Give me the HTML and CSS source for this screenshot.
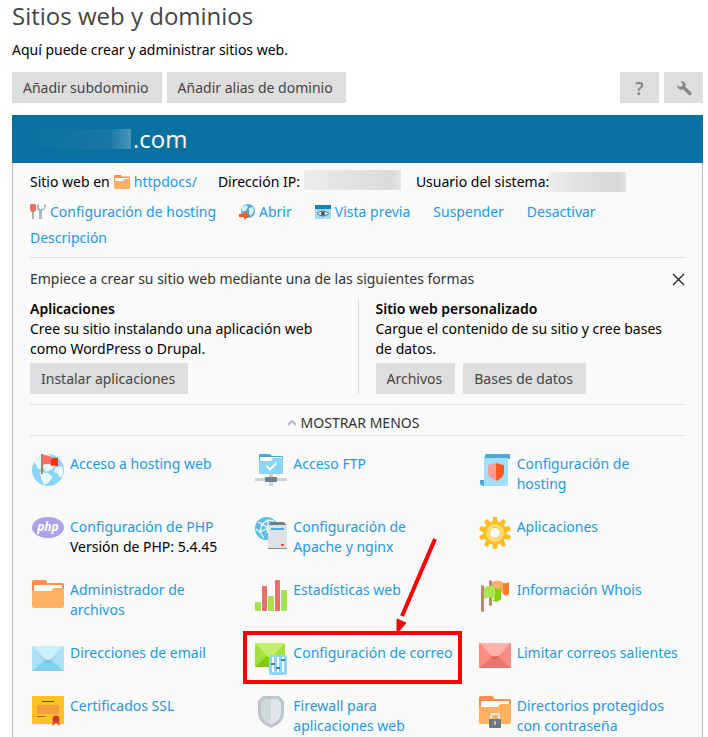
FILE: index.html
```
<!DOCTYPE html>
<html lang="es">
<head>
    <meta charset="UTF-8">
    <meta name="viewport" content="width=device-width, initial-scale=1.0">
    <title>Sitios web y dominios</title>
    <link rel="stylesheet" href="styles.css">
</head>
<body>
    <h1>Sitios web y dominios</h1>
    <p class="intro">Aquí puede crear y administrar sitios web.</p>

    <div class="toolbar">
        <button type="button" class="btn">Añadir subdominio</button>
        <button type="button" class="btn">Añadir alias de dominio</button>
        <button type="button" class="btn btn-icon btn-help" aria-label="Ayuda">?</button>
        <button type="button" class="btn btn-icon" aria-label="Ajustes">
            <svg width="16" height="16" viewBox="0 0 16 16"><path d="M4.500 1.500A4 4 0 0 1 9.400 6.800L15 12.200A1.700 1.700 0 0 1 12.600 14.700L7 9.300A4 4 0 0 1 1.200 5.200L3.600 6.800L6.200 6.200L6.600 3.800Z" fill="#868686"/></svg>
        </button>
    </div>

    <div class="panel">
        <h2><span class="domain-hidden"></span>.com</h2>
        <div class="panel-body">
            <div class="info">
                <span class="info-item">Sitio web en
                    <a href="#" class="icon-link">
                        <svg width="16" height="16" viewBox="0 0 32 32"><path d="M0 4q0-2 2-2h11q2 0 2 3h15q2 0 2 2v10H0z" fill="#ff8c50"/><path d="M2 8h28v8H2z" fill="#fff"/><path d="M0 14h18q2-4 4-4h10v18q0 2-2 2H2q-2 0-2-2z" fill="#ffb060"/></svg>
                        httpdocs/</a>
                </span>
                <span class="info-item">Dirección IP: <span class="ip-hidden"></span></span>
                <span class="info-item user">Usuario del sistema:<span class="user-hidden"></span></span>
            </div>
            <div class="actions">
                <a href="#" class="icon-link">
                    <svg width="16" height="16" viewBox="0 0 16 16"><path d="M1 0h4l1 1v5L4.500 8h-3L0 6V1z" fill="#eb6e66"/><path d="M2 8h2v7H2z" fill="#a8b4ba"/><path d="M7 1q-1 4 2 6v8h3V7q4-2 4-6l-2-1v4l-2 1h-2L9 4V0z" fill="#adb7bd"/></svg>
                    Configuración de hosting</a>
                <a href="#" class="icon-link">
                    <svg width="16" height="16" viewBox="0 0 16 16"><circle cx="9" cy="7" r="7" fill="#55a9d5"/><path d="M3 3l4-2 2 2-2 3-2 2-2-1zM10 4l4-1 1 4-3 5-2-2V7zM6 9l3 1-1 3z" fill="#d7f0fa"/><path d="M0 10h5V7l6 4.500L5 16v-3H0z" fill="#ff5b14"/></svg>
                    Abrir</a>
                <a href="#" class="icon-link">
                    <svg width="16" height="16" viewBox="0 0 16 16"><rect y="1" width="16" height="14" rx="1" fill="#a4daf2"/><path d="M0 1h16v4H0z" fill="#0d83b7"/><path d="M2 9.500q6-5 12 0q-6 5-12 0" fill="#eef7fb" stroke="#55717e"/><circle cx="8" cy="9.500" r="2" fill="#39505e"/></svg>
                    Vista previa</a>
                <a href="#">Suspender</a>
                <a href="#">Desactivar</a>
                <a href="#">Descripción</a>
            </div>

            <section class="start">
                <div class="start-head">
                    <span>Empiece a crear su sitio web mediante una de las siguientes formas</span>
                    <button type="button" class="close" aria-label="Cerrar">
                        <svg width="13" height="13" viewBox="0 0 13 13"><path d="M1 1l11 11M12 1L1 12" stroke="#222" stroke-width="1.300" fill="none"/></svg>
                    </button>
                </div>
                <div class="start-cols">
                    <div class="start-col">
                        <h3>Aplicaciones</h3>
                        <p>Cree su sitio instalando una aplicación web como WordPress o Drupal.</p>
                        <button type="button" class="btn">Instalar aplicaciones</button>
                    </div>
                    <div class="start-col">
                        <h3>Sitio web personalizado</h3>
                        <p>Cargue el contenido de su sitio y cree bases de datos.</p>
                        <div class="start-buttons">
                            <button type="button" class="btn">Archivos</button>
                            <button type="button" class="btn">Bases de datos</button>
                        </div>
                    </div>
                </div>
            </section>

            <button type="button" class="toggle">
                <svg width="8" height="6" viewBox="0 0 8 6"><path d="M0 5l4-4 4 4" stroke="#a9bac6" stroke-width="2" fill="none"/></svg>
                MOSTRAR MENOS
            </button>

            <div class="tools">
                <div class="tool">
                    <svg width="32" height="32" viewBox="0 0 32 32"><circle cx="16" cy="16" r="16" fill="#8bd5f6"/><path d="M2 8q5-7 14-8l4 2-3 4 6 5-3 4-6 3-2-4-6 1-2-4zM8 18l8 1 5 4-5 6-4 2-3-7zM23 14l7-2q2 4 1 9l-3 3-2-4-4-2z" fill="#e8f8fd"/><path d="M9 0h2v20H9z" fill="#b2836c"/><path d="M11 1q5 0 9 2v8q-5-2-9 0z" fill="#ff6f63"/><path d="M19 5q3-2 7-1v8q-4-1-7 0z" fill="#ee350b"/></svg>
                    <div class="tool-text"><a href="#">Acceso a hosting web</a></div>
                </div>
                <div class="tool">
                    <svg width="32" height="32" viewBox="0 0 32 32"><path d="M4 1q0-1 1-1h10l2 2h10q1 0 1 1v8H4z" fill="#4fa8d2"/><path d="M5 3h22v5H5z" fill="#fff"/><path d="M4 7h12l2-3h10v15q0 1-1 1H5q-1 0-1-1z" fill="#8bd5f6"/><path d="M11.500 12l3.500 3.500 6.500-6.500" fill="none" stroke="#fff" stroke-width="2"/><path d="M0 24h32v3H0zM14 20h4v12h-4z" fill="#c9d3d8"/><rect x="10" y="23" width="12" height="5" rx="1" fill="#6f8088"/></svg>
                    <div class="tool-text"><a href="#">Acceso FTP</a></div>
                </div>
                <div class="tool">
                    <svg width="32" height="32" viewBox="0 0 32 32"><path d="M5 3h24v29H3l2-4z" fill="#a1e0fc"/><path d="M7 0h24v5h-2V4H6V1zM1 26h4v6H4q-3 0-3-4z" fill="#4fa8d2"/><path d="M17 9l8 2v7q0 6-8 9z" fill="#ff5a25"/><path d="M17 9l-8 2v7q0 6 8 9z" fill="#ff9b91"/></svg>
                    <div class="tool-text"><a href="#">Configuración de hosting</a></div>
                </div>

                <div class="tool">
                    <svg width="32" height="32" viewBox="0 0 32 32"><ellipse cx="16" cy="10.500" rx="16" ry="10.500" fill="#ada2ea"/><text x="16" y="14" class="php">php</text></svg>
                    <div class="tool-text"><a href="#">Configuración de PHP</a><span class="note">Versión de PHP: 5.4.45</span></div>
                </div>
                <div class="tool">
                    <svg width="32" height="32" viewBox="0 0 32 32"><circle cx="11.500" cy="11.500" r="11.500" fill="#60bde8"/><path d="M3 5l4 2 6-4 6 1M7 7l-2 8 8-4-6-4M13 3v8l4 2M1 12l4 3 4 6M13 11l-1 5" fill="none" stroke="#eaf7fd" stroke-width="1.300"/><path d="M16 5h13l3 4H13z" fill="#6f8088"/><path d="M13 8h19v24H13z" fill="#dce2e6"/><path d="M13 31h19v1H13z" fill="#7c8a91"/><path d="M16 11h13v2H16z" fill="#4ab0db"/><path d="M26 27h3v2h-3z" fill="#ff4632"/></svg>
                    <div class="tool-text"><a href="#">Configuración de Apache y nginx</a></div>
                </div>
                <div class="tool">
                    <svg width="32" height="32" viewBox="0 0 32 32"><g fill="#ffbd22"><circle cx="16" cy="16" r="11.500"/><path id="teeth" d="M13 6l1-6h4l1 6zM13 26l1 6h4l1-6z"/><use href="#teeth" transform="rotate(36 16 16)"/><use href="#teeth" transform="rotate(72 16 16)"/><use href="#teeth" transform="rotate(108 16 16)"/><use href="#teeth" transform="rotate(144 16 16)"/></g><circle cx="16" cy="16" r="9" fill="#ffdc79"/><circle cx="16" cy="16" r="5.500" fill="#fafafa" stroke="#ffc83f"/></svg>
                    <div class="tool-text"><a href="#">Aplicaciones</a></div>
                </div>

                <div class="tool">
                    <svg width="32" height="32" viewBox="0 0 32 32"><path d="M0 2q0-2 2-2h11q2 0 2 3h15q2 0 2 2v12H0z" fill="#ff8c50"/><path d="M2 6q0-1 1-1h26q1 0 1 1v8H2z" fill="#fff"/><path d="M0 11h19q1-3 3-3h10v18q0 2-2 2H2q-2 0-2-2z" fill="#ffb060"/></svg>
                    <div class="tool-text"><a href="#">Administrador de archivos</a></div>
                </div>
                <div class="tool">
                    <svg width="32" height="32" viewBox="0 0 32 32"><g fill="#a6e154"><rect y="22" width="6" height="9" rx="1"/><rect x="13" y="16" width="6" height="15" rx="1"/><rect x="26" y="10" width="6" height="21" rx="1"/></g><g fill="#eb7069"><rect x="7" y="6" width="5" height="25" rx="1"/><rect x="20" width="5" height="31" rx="1"/></g></svg>
                    <div class="tool-text"><a href="#">Estadísticas web</a></div>
                </div>
                <div class="tool">
                    <svg width="32" height="32" viewBox="0 0 32 32"><path d="M10 1q1-2 3 0v24q-1 2-3 0z" fill="#b98a70"/><path d="M13 2q6-3 11 0v11q-6-3-11 0z" fill="#ffae6d"/><path d="M24 3q3 1 6-1v12q-3 3-6 0z" fill="#ff7b30"/><path d="M2 6q1-2 3 0v25q-1 2-3 0z" fill="#b98a70"/><path d="M5 8q5-4 11-1v12q-6-3-11 0z" fill="#ace653"/><path d="M16 8q3 3 6-1v12q-4 5-9 1l3-1z" fill="#85cf0b"/></svg>
                    <div class="tool-text"><a href="#">Información Whois</a></div>
                </div>

                <div class="tool">
                    <svg width="32" height="32" viewBox="0 0 32 32"><rect y="3" width="32" height="25" rx="1" fill="#ace1f6"/><path d="M0 28l14-12h4l14 12z" fill="#80d0ef"/><path d="M1 3h30L20 17q-4 4-8 0z" fill="#caf0fe"/><path d="M1 3l11 13q1 1 4 1t4-1L31 3 20 17q-4 5-8 0z" fill="#76bddb"/></svg>
                    <div class="tool-text"><a href="#">Direcciones de email</a></div>
                </div>
                <div class="tool marked">
                    <svg width="32" height="32" viewBox="0 0 32 32"><rect width="30" height="24" rx="1" fill="#a5df3d"/><path d="M0 24l12-11h6l12 11z" fill="#81ca10"/><path d="M0 0h30L18 13q-3 3-6 0z" fill="#c5f06b"/><rect x="14" y="12" width="18" height="20" rx="2" fill="#8bd5f6"/><path d="M18 14v15M23 14v15M28 14v15" stroke="#fff" stroke-width="2"/><path d="M16 21h4M21 25h4M26 17h4" stroke="#377b9d" stroke-width="2"/></svg>
                    <div class="tool-text"><a href="#">Configuración de correo</a></div>
                    <span class="mark-box"></span>
                    <svg class="mark-arrow" width="46" height="100" viewBox="0 0 46 100"><path d="M42 3L9 80" stroke="#f00" stroke-width="4"/><path d="M4 97V83l9 4z" fill="#f00" stroke="#f00"/></svg>
                </div>
                <div class="tool">
                    <svg width="32" height="32" viewBox="0 0 32 32"><rect width="32" height="25" rx="1" fill="#fb8d83"/><path d="M0 25l13-11h6l13 11z" fill="#eb746c"/><path d="M1 0h30L20 13q-4 3-8 0z" fill="#ffb2a9"/><path d="M11 12q5 3 10 0-5 8-10 0" fill="#d76058"/></svg>
                    <div class="tool-text"><a href="#">Limitar correos salientes</a></div>
                </div>

                <div class="tool">
                    <svg width="32" height="32" viewBox="0 0 32 32"><rect width="32" height="28" rx="1" fill="#ffc126"/><path d="M5 9h22v9H5z" fill="#f79d42"/><path d="M10 5.500h12" stroke="#3e4a50"/><path d="M5 20.500h8" stroke="#90651c"/><path d="M21 24l-1 6 3-2 1-2 1 2 3 2-1-6z" fill="#e25832"/><circle cx="24" cy="23" r="3.500" fill="#d33527"/></svg>
                    <div class="tool-text"><a href="#">Certificados SSL</a></div>
                </div>
                <div class="tool">
                    <svg width="32" height="32" viewBox="0 0 32 32"><path d="M8 0h16l5 5v12q0 10-13 15Q3 27 3 17V5z" fill="#bdc6ca"/><path d="M16 3h7l3 4v10q0 7-10 12z" fill="#e0e5e8"/><path d="M16 3H9L6 7v10q0 7 10 12z" fill="#d0d8dc"/></svg>
                    <div class="tool-text"><a href="#">Firewall para aplicaciones web</a></div>
                </div>
                <div class="tool">
                    <svg width="32" height="32" viewBox="0 0 32 32"><path d="M0 2q0-2 2-2h11q2 0 2 3h15q2 0 2 2v12H0z" fill="#ff8c50"/><path d="M2 6q0-1 1-1h26q1 0 1 1v8H2z" fill="#fff"/><path d="M0 11h19q1-3 3-3h10v18q0 2-2 2H2q-2 0-2-2z" fill="#ffb060"/><path d="M12 24v-4q0-2 2-2h4q2 0 2 2v4" fill="none" stroke="#dce5ea" stroke-width="2"/><rect x="10" y="23" width="12" height="9" rx="1" fill="#667983"/><path d="M15 25h2v4h-2z" fill="#ffb060"/></svg>
                    <div class="tool-text"><a href="#">Directorios protegidos con contraseña</a></div>
                </div>
            </div>
        </div>
    </div>
</body>
</html>
```
FILE: styles.css
```
* {
    box-sizing: border-box;
}

body {
    margin: 0;
    padding: 0 5px 0 12px;
    background-color: #fff;
    color: #000;
    font-family: "Noto Sans", "Open Sans", sans-serif;
    font-size: 14px;
    line-height: 20px;
}

h1, h2, h3, p {
    margin: 0;
}

h1 {
    color: #444;
    font-family: "Open Sans", sans-serif;
    font-size: 24px;
    font-weight: 400;
    line-height: 32px;
}

.intro {
    margin: 8px 0 12px;
}

a {
    color: #2698e2;
    text-decoration: none;
}

button {
    border: 0;
    font: inherit;
    cursor: pointer;
}

.btn {
    height: 31px;
    padding: 0 13px 0 11px;
    background-color: #dedede;
    color: #454545;
}

.btn-icon {
    display: flex;
    align-items: center;
    justify-content: center;
    width: 39px;
    padding: 0;
}

.btn-help {
    margin-left: auto;
    color: #868686;
    font-size: 18px;
    font-weight: 600;
}

.toolbar {
    display: flex;
    gap: 5px;
    margin-bottom: 12px;
}

/* panel del dominio */
.panel {
    background-color: #fafafa;
}

.panel h2 {
    display: flex;
    align-items: center;
    height: 48px;
    padding-left: 14px;
    background-color: #0971a1;
    color: #fff;
    font-family: "Open Sans", sans-serif;
    font-size: 24px;
    font-weight: 400;
}

.domain-hidden {
    width: 105px;
    height: 20px;
    margin-right: 2px;
    background: linear-gradient(90deg, #0971a1, #1977a5 80%, #4a97bc);
}

.panel-body {
    padding: 9px 17px 8px;
    border: solid #bbb;
    border-width: 0 1px;
}

.info,
.actions {
    display: flex;
    flex-wrap: wrap;
}

.info {
    column-gap: 21px;
    margin-bottom: 7px;
}

.info-item,
.icon-link {
    display: inline-flex;
    align-items: center;
    gap: 4px;
}

.info-item.user {
    gap: 0;
    margin-left: -6px;
}

.ip-hidden {
    width: 97px;
    height: 20px;
    margin: -4px 0 0;
    background: linear-gradient(90deg, #ececec, #e4e4e4 40%, #dadada 90%, #e6e8e9);
}

.user-hidden {
    width: 77px;
    height: 20px;
    background: linear-gradient(90deg, #eeefef, #e0e0e0 40%, #d8d8d8 90%, #e2e3e4);
}

.actions {
    gap: 6px 23px;
    padding: 3px 0 9px;
    border-bottom: 1px solid #ddd;
}

.start {
    padding: 11px 0 10px;
    border-bottom: 1px solid #ddd;
}

.start-head {
    display: flex;
    align-items: center;
    justify-content: space-between;
    margin-bottom: 10px;
    color: #333;
}

.close {
    display: flex;
    padding: 0;
    background: none;
}

.start-cols {
    display: grid;
    grid-template-columns: 1fr 1fr;
}

.start-col + .start-col {
    padding-left: 17px;
    border-left: 1px solid #ddd;
}

.start-col h3 {
    font-size: 14px;
    font-weight: 600;
    line-height: 20px;
}

.start-col p {
    margin-bottom: 4px;
    padding-right: 10px;
}

.start-buttons {
    display: flex;
    gap: 8px;
}

.toggle {
    display: flex;
    align-items: center;
    justify-content: center;
    gap: 5px;
    width: 100%;
    padding: 8px 8px 2px 0;
    border-bottom: 1px solid #ddd;
    background: none;
    color: #333;
}

/* herramientas */
.tools {
    display: grid;
    grid-template-columns: repeat(3, 1fr);
    gap: 23px 17px;
    padding: 18px 0 0 2px;
}

.tool {
    display: flex;
    gap: 6px;
}

.tool > svg {
    flex: none;
    margin-bottom: -2px;
}

.tool-text {
    min-width: 0;
    padding-right: 5px;
}

.note {
    display: block;
}

.php {
    fill: #fff;
    font-family: "Open Sans", sans-serif;
    font-size: 12px;
    font-style: italic;
    font-weight: 700;
    text-anchor: middle;
}

/* marca roja sobre la herramienta */
.marked {
    position: relative;
}

.mark-box {
    position: absolute;
    top: -12px;
    left: -12px;
    width: 219px;
    height: 53px;
    border: 4px solid #f00;
}

.mark-arrow {
    position: absolute;
    top: -107px;
    left: 138px;
}
```
